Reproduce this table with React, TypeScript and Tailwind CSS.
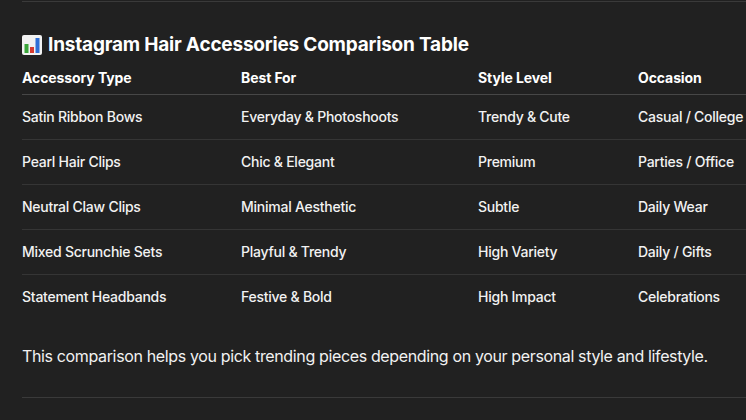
import React from "react";

const rows = [
  ["Satin Ribbon Bows", "Everyday & Photoshoots", "Trendy & Cute", "Casual / College"],
  ["Pearl Hair Clips", "Chic & Elegant", "Premium", "Parties / Office"],
  ["Neutral Claw Clips", "Minimal Aesthetic", "Subtle", "Daily Wear"],
  ["Mixed Scrunchie Sets", "Playful & Trendy", "High Variety", "Daily / Gifts"],
  ["Statement Headbands", "Festive & Bold", "High Impact", "Celebrations"],
];

function ChartEmoji() {
  return (
    <svg width="20" height="20" viewBox="0 0 20 20" className="shrink-0">
      <rect x="0" y="0" width="20" height="20" rx="2" fill="#f2f2f2" />
      <rect x="2.5" y="9" width="4" height="9" fill="#3aa63a" />
      <rect x="8" y="12" width="4" height="6" fill="#d63a2f" />
      <rect x="13.5" y="3" width="4" height="15" fill="#2f6fd6" />
    </svg>
  );
}

export default function App() {
  return (
    <div
      className="w-[746px] h-[420px] overflow-hidden bg-[#212121] text-[#ececec]"
      style={{ fontFamily: "Inter, 'Liberation Sans', sans-serif" }}
    >
      <div className="pl-[22px] pt-[1px]">
        <div className="h-px bg-[#3a3a3a]" />
        <div className="mt-[29px] flex items-center gap-[6px] h-[28px]">
          <ChartEmoji />
          <h3 className="text-[19px] font-bold leading-[28px] text-white tracking-[-0.2px]">
            Instagram Hair Accessories Comparison Table
          </h3>
        </div>
        <div className="w-[800px] text-[14px]">
          <div className="grid grid-cols-[219px_237px_160px_184px] border-b border-[#474747] pt-[9px] pb-[6px] font-bold text-white leading-[20px] tracking-[-0.1px]">
            <div>Accessory Type</div>
            <div>Best For</div>
            <div>Style Level</div>
            <div>Occasion</div>
          </div>
          {rows.map((r, i) => (
            <div
              key={i}
              className={
                "grid grid-cols-[219px_237px_160px_184px] py-[12px] leading-[20px] text-[#f2f2f2] font-[450] tracking-[-0.25px] " +
                (i < rows.length - 1 ? "border-b border-[#353535]" : "pb-[13px]")
              }
            >
              {r.map((c, j) => (
                <div key={j}>{c}</div>
              ))}
            </div>
          ))}
        </div>
        <p className="mt-[24px] text-[16px] leading-[24px] text-[#f2f2f2] tracking-[-0.36px]">
          This comparison helps you pick trending pieces depending on your personal style and lifestyle.
        </p>
        <div className="mt-[29px] h-px bg-[#3a3a3a]" />
      </div>
    </div>
  );
}
